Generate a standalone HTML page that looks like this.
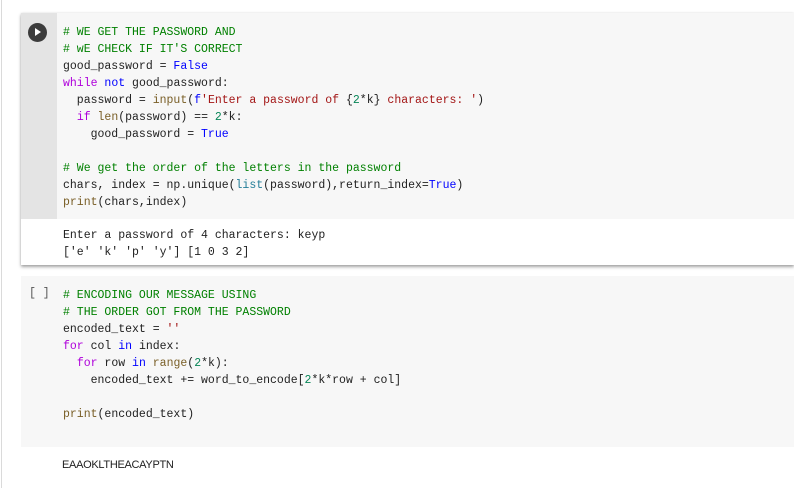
<!DOCTYPE html>
<html><head><style>
body{margin:0;width:794px;height:488px;background:#fff;position:relative;overflow:hidden;font-family:"Liberation Mono",monospace;}
.vl{position:absolute;left:1px;top:0;width:1px;height:488px;background:#dadada}
.c1{position:absolute;left:21px;top:13px;width:773px;height:252px;background:#fff;box-shadow:0 2px 3px rgba(0,0,0,.35),0 0 2px rgba(0,0,0,.1)}
.g1{position:absolute;left:21px;top:13px;width:36px;height:206px;background:#e4e4e4}
.code1{position:absolute;left:57px;top:13px;width:737px;height:206px;background:#f7f7f7}
.c2{position:absolute;left:21px;top:276px;width:773px;height:171px;background:#f7f7f7}
pre{margin:0;position:absolute;font-family:"Liberation Mono",monospace;font-size:11.5px;line-height:17px;color:#212121}
.cm{color:#008000}.kw{color:#af00db}.bl{color:#0000ff}.st{color:#a31515}.nu{color:#098658}.fn{color:#795e26}.bi{color:#267f99}
.play{position:absolute;left:28px;top:23px;width:19px;height:19px;border-radius:50%;background:#3c3c3c}
.play:after{content:"";position:absolute;left:7px;top:5px;border-left:6px solid #fff;border-top:4.5px solid transparent;border-bottom:4.5px solid transparent}
.br{position:absolute;left:29px;top:287px;font-size:11.5px;color:#555;font-family:"Liberation Mono",monospace}
.out2{position:absolute;left:62px;top:459px;font-family:"Liberation Sans",sans-serif;font-size:11px;color:#212121;letter-spacing:-0.3px}
</style></head><body>
<div class="vl"></div>
<div class="c1"></div>
<div class="g1"></div>
<div class="code1"></div>
<div class="play"></div>
<pre style="left:63px;top:24px"><span class="cm"># WE GET THE PASSWORD AND</span>
<span class="cm"># wE CHECK IF IT'S CORRECT</span>
good_password = <span class="bl">False</span>
<span class="kw">while</span> <span class="bl">not</span> good_password:
  password = <span class="fn">input</span>(<span class="bl">f</span><span class="st">'Enter a password of </span>{<span class="nu">2</span>*k}<span class="st"> characters: '</span>)
  <span class="kw">if</span> <span class="fn">len</span>(password) == <span class="nu">2</span>*k:
    good_password = <span class="bl">True</span>

<span class="cm"># We get the order of the letters in the password</span>
chars, index = np.unique(<span class="bi">list</span>(password),return_index=<span class="bl">True</span>)
<span class="fn">print</span>(chars,index)</pre>
<pre style="left:63px;top:227px">Enter a password of 4 characters: keyp
['e' 'k' 'p' 'y'] [1 0 3 2]</pre>
<div class="c2"></div>
<div class="br">[ ]</div>
<pre style="left:63px;top:287px"><span class="cm"># ENCODING OUR MESSAGE USING</span>
<span class="cm"># THE ORDER GOT FROM THE PASSWORD</span>
encoded_text = <span class="st">''</span>
<span class="kw">for</span> col <span class="bl">in</span> index:
  <span class="kw">for</span> row <span class="bl">in</span> <span class="fn">range</span>(<span class="nu">2</span>*k):
    encoded_text += word_to_encode[<span class="nu">2</span>*k*row + col]

<span class="fn">print</span>(encoded_text)</pre>
<div class="out2">EAAOKLTHEACAYPTN</div>
</body></html>
